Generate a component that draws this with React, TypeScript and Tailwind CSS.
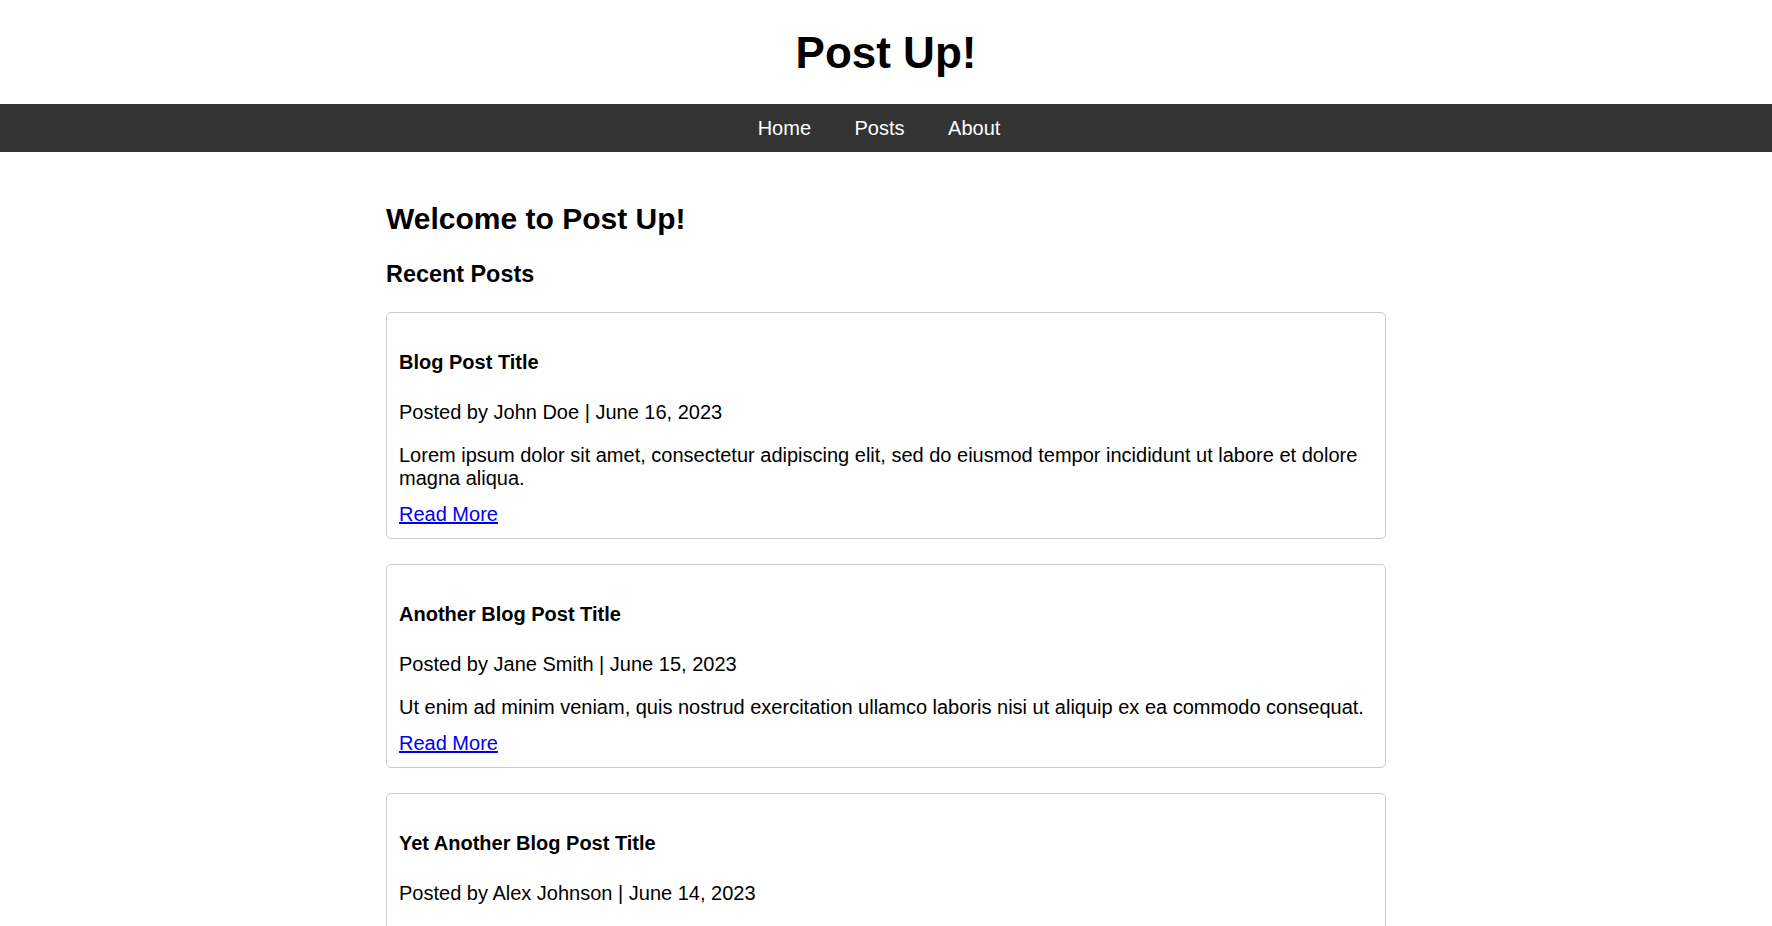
import React from "react";

const posts = [
  {
    title: "Blog Post Title",
    meta: "Posted by John Doe | June 16, 2023",
    body: "Lorem ipsum dolor sit amet, consectetur adipiscing elit, sed do eiusmod tempor incididunt ut labore et dolore magna aliqua.",
  },
  {
    title: "Another Blog Post Title",
    meta: "Posted by Jane Smith | June 15, 2023",
    body: "Ut enim ad minim veniam, quis nostrud exercitation ullamco laboris nisi ut aliquip ex ea commodo consequat.",
  },
  {
    title: "Yet Another Blog Post Title",
    meta: "Posted by Alex Johnson | June 14, 2023",
    body: "Duis aute irure dolor in reprehenderit in voluptate velit esse cillum dolore eu fugiat nulla pariatur.",
  },
];

export default function App() {
  return (
    <div className="min-h-screen bg-white text-black font-['Liberation_Sans',Arial,sans-serif] text-[20px] leading-[23px]">
      <header className="pt-[27px] pb-[26px] text-center">
        <h1 className="text-[44px] leading-[51px] font-bold">Post Up!</h1>
      </header>
      <nav className="h-[48px] bg-[#333333] flex items-center justify-center pr-[14px]">
        <ul className="flex gap-[43.5px] text-white">
          <li>
            <a href="#">Home</a>
          </li>
          <li>
            <a href="#">Posts</a>
          </li>
          <li>
            <a href="#">About</a>
          </li>
        </ul>
      </nav>
      <main className="max-w-[1000px] mx-auto pt-[50px] pb-[40px]">
        <h2 className="text-[30px] leading-[34px] font-bold">Welcome to Post Up!</h2>
        <h3 className="mt-[25px] text-[23.4px] leading-[27px] font-bold">Recent Posts</h3>
        <div className="mt-[24px] flex flex-col gap-[25px]">
          {posts.map((p) => (
            <article
              key={p.title}
              className="border border-[#cccccc] rounded-[5px] p-[12px]"
            >
              <h4 className="mt-[26px] mb-[27px] font-bold">{p.title}</h4>
              <p className="mb-[20px]">{p.meta}</p>
              <p className="mb-[13px]">{p.body}</p>
              <a href="#" className="text-[#0000ee] underline">
                Read More
              </a>
            </article>
          ))}
        </div>
      </main>
    </div>
  );
}
